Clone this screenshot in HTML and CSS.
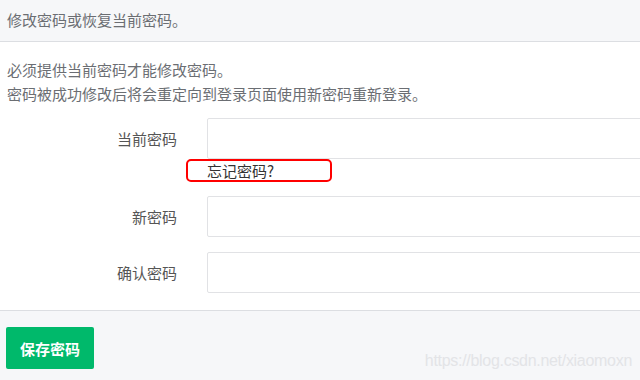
FILE: index.html
```html
<!DOCTYPE html>
<html lang="zh-CN">
<head>
    <meta charset="UTF-8">
    <meta name="viewport" content="width=device-width, initial-scale=1.0">
    <title>修改密码</title>
    <link rel="stylesheet" href="styles.css">
</head>
<body>
    <div class="panel-head">修改密码或恢复当前密码。</div>
    <div class="panel-body">
        <p class="intro">必须提供当前密码才能修改密码。<br>密码被成功修改后将会重定向到登录页面使用新密码重新登录。</p>
        <form class="pw-form" action="/password" method="post">
            <div class="form-row">
                <label for="oldPw">当前密码</label>
                <input type="password" id="oldPw" name="oldPw">
            </div>
            <div class="help-row">
                <a class="forgot" href="#">忘记密码?</a>
            </div>
            <div class="form-row">
                <label for="newPw">新密码</label>
                <input type="password" id="newPw" name="newPw">
            </div>
            <div class="form-row">
                <label for="confirmPw">确认密码</label>
                <input type="password" id="confirmPw" name="confirmPw">
            </div>
        </form>
    </div>
    <div class="panel-foot">
        <button type="submit" class="btn-save">保存密码</button>
        <span class="watermark">https://blog.csdn.net/xiaomoxn</span>
    </div>
</body>
</html>
```

FILE: styles.css
```css
body {
    margin: 0;
    font-family: "Noto Sans CJK SC", "Liberation Sans", sans-serif;
    font-size: 15px;
    color: #555;
    background-color: #f6f7f9;
    overflow: hidden;
}

.panel-head {
    height: 42px;
    line-height: 40px;
    padding-left: 7px;
    color: #6b6e73;
    background-color: #f6f7f9;
    border-bottom: 1px solid #dcdee2;
    box-sizing: border-box;
}

.panel-body {
    background-color: #ffffff;
    padding: 16px 0 17px 7px;
    border-bottom: 1px solid #dcdee2;
}

.intro {
    margin: 0 0 12px 0;
    line-height: 24px;
    color: #6b6e73;
}

.pw-form {
    display: flex;
    flex-direction: column;
}

.form-row {
    display: flex;
    align-items: center;
    gap: 30px;
}

.form-row + .form-row {
    margin-top: 15px;
}

.form-row label {
    width: 170px;
    flex-shrink: 0;
    text-align: right;
    color: #555;
}

.form-row input {
    width: 460px;
    flex-shrink: 0;
    height: 41px;
    box-sizing: border-box;
    border: 1px solid #e1e2e5;
    border-radius: 2px;
    padding: 0 10px;
    font-size: 15px;
}

.help-row {
    padding-left: 200px;
    margin-bottom: 14px;
}

.forgot {
    display: inline-block;
    box-sizing: border-box;
    width: 146px;
    height: 23px;
    line-height: 19px;
    margin-left: -21px;
    padding-left: 19px;
    border: 2px solid #ff0000;
    border-radius: 5px;
    color: #333;
    text-decoration: none;
}

.panel-foot {
    display: flex;
    align-items: flex-start;
    padding: 16px 0 0 6px;
    height: 69px;
    box-sizing: border-box;
}

.btn-save {
    width: 88px;
    height: 42px;
    border: none;
    border-radius: 2px;
    background-color: #00b96b;
    color: #ffffff;
    font-family: inherit;
    font-size: 15px;
    font-weight: bold;
    cursor: pointer;
}

.watermark {
    margin-left: auto;
    margin-right: 8px;
    margin-top: 25px;
    font-family: "Liberation Sans", sans-serif;
    font-size: 16px;
    letter-spacing: -0.3px;
    color: #e3e4e7;
}
```
